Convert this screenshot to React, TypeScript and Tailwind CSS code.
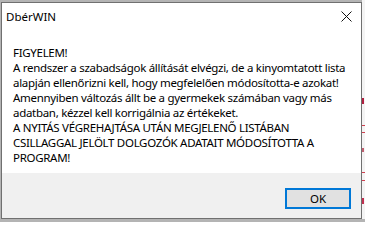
import React from 'react';

// message box text, one entry per visual line
const lines = [
  'FIGYELEM!',
  'A rendszer a szabadságok állítását elvégzi, de a kinyomtatott lista',
  'alapján ellenőrizni kell, hogy megfelelően módosította-e azokat!',
  'Amennyiben változás állt be a gyermekek számában vagy más',
  'adatban, kézzel kell korrigálnia az értékeket.',
  'A NYITÁS VÉGREHAJTÁSA UTÁN MEGJELENŐ LISTÁBAN',
  'CSILLAGGAL JELÖLT DOLGOZÓK ADATAIT MÓDOSÍTOTTA A',
  'PROGRAM!',
];

export default function App() {
  return (
    <div className="flex w-[365px] h-[222px] overflow-hidden bg-[#b4b4b4] font-['Noto_Sans',sans-serif] text-[11.5px] tracking-[-0.3px] text-black">
      {/* Dialog */}
      <div className="ml-[1px] mt-[2px] flex h-[217px] w-[361px] shrink-0 flex-col border border-[#707070] bg-white">
        {/* Title bar */}
        <div className="flex h-[27px] items-center justify-between pl-[4px] pr-[9px]">
          <span className="leading-[15px] tracking-normal">DbérWIN</span>
          <svg width="11" height="11" viewBox="0 0 11 11">
            <path d="M0.5 0.5 L10.5 10.5 M10.5 0.5 L0.5 10.5" stroke="#111" strokeWidth="1" />
          </svg>
        </div>

        {/* Message */}
        <div className="flex-1 pl-[11px] pt-[15px] leading-[15px]">
          {lines.map((line) => (
            <div key={line} className="whitespace-nowrap">
              {line}
            </div>
          ))}
        </div>

        {/* Button row */}
        <div className="flex h-[45px] items-start justify-end bg-[#f0f0f0] pr-[10px] pt-[15px]">
          <button className="flex h-[21px] w-[66px] items-center justify-center border-2 border-[#0078d7] bg-[#e1e1e1] leading-none tracking-normal">
            OK
          </button>
        </div>
      </div>

      {/* window behind the dialog, peeking out on the right */}
      <div className="flex h-[219px] flex-1 flex-col bg-[#f4f4f4] pt-[98px]">
        <div className="h-[6px] w-[2px] bg-[#b02040]" />
        <div className="mt-[21px] h-[1px] w-[3px] bg-[#d04050]" />
        <div className="mt-[6px] h-[1px] w-[3px] bg-[#d04050]" />
        <div className="mt-[15px] h-[4px] w-[2px] bg-[#c06070]" />
        <div className="mt-[20px] h-[1px] w-[3px] bg-[#d04050]" />
        <div className="mt-[7px] h-[1px] w-[3px] bg-[#d04050]" />
        <div className="mt-[17px] h-[6px] w-[2px] bg-[#c03050]" />
      </div>
    </div>
  );
}
